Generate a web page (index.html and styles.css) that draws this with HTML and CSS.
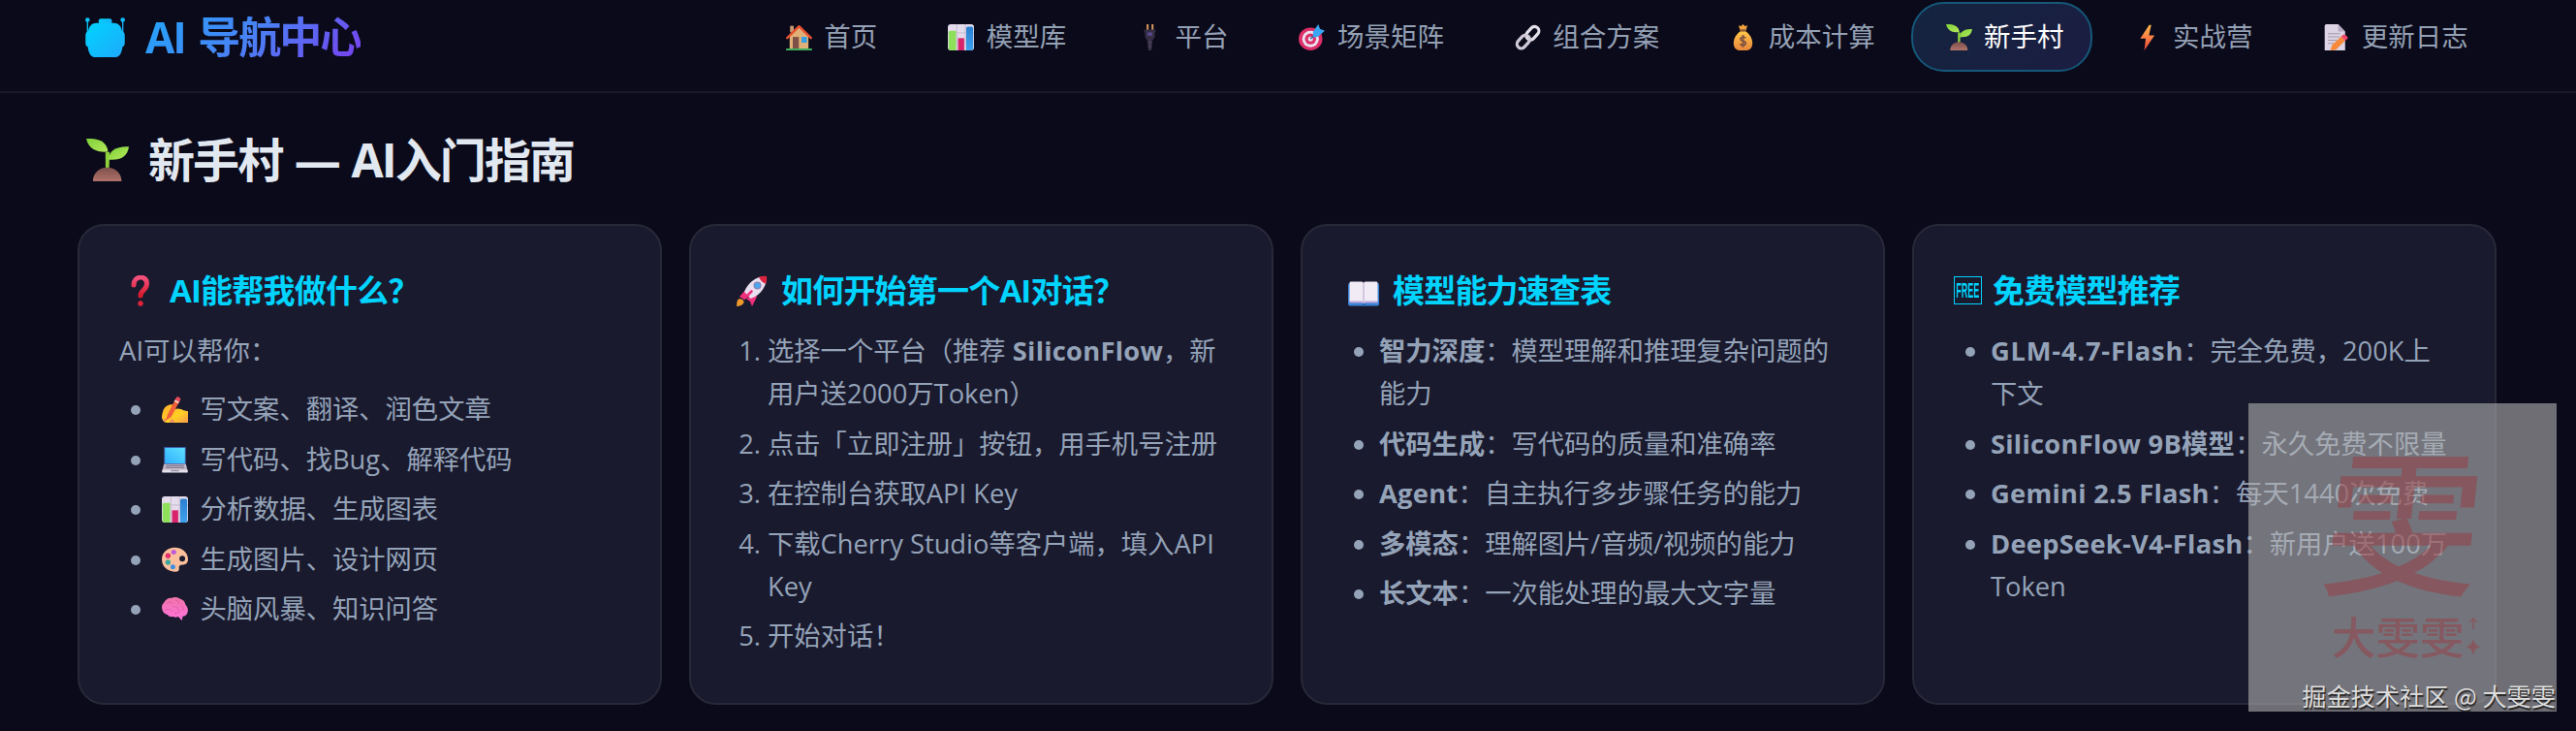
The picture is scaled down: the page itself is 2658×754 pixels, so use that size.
FILE: index.html
```html
<!DOCTYPE html>
<html lang="zh-CN">
  <head>
    <meta charset="UTF-8">
    <title>AI 导航中心</title>
    <link rel="stylesheet" href="styles.css">
  </head>
  <body>
    <!-- Icon sprite -->
    <svg class="sprite" width="0" height="0">
      <defs>
        <linearGradient id="g-leaf" x1="0" y1="0" x2="1" y2="1"><stop offset="0" stop-color="#7fd13b"/><stop offset="1" stop-color="#b5e85a"/></linearGradient>
        <linearGradient id="g-soil" x1="0" y1="0" x2="0" y2="1"><stop offset="0" stop-color="#7d4f4b"/><stop offset="1" stop-color="#b0736a"/></linearGradient>
        <linearGradient id="g-bolt" x1="0" y1="0" x2="0" y2="1"><stop offset="0" stop-color="#ffb84a"/><stop offset="1" stop-color="#f5463f"/></linearGradient>
        <linearGradient id="g-gold" x1="0" y1="0" x2="0" y2="1"><stop offset="0" stop-color="#ffc648"/><stop offset="1" stop-color="#e8863c"/></linearGradient>
        <linearGradient id="g-brain" x1="0" y1="0" x2="0" y2="1"><stop offset="0" stop-color="#ef74a8"/><stop offset="1" stop-color="#ff74dc"/></linearGradient>
        <linearGradient id="g-screen" x1="0" y1="1" x2="1" y2="0"><stop offset="0" stop-color="#2fb0ff"/><stop offset="1" stop-color="#5fe0ff"/></linearGradient>
        <linearGradient id="g-hand" x1="0" y1="0" x2="1" y2="1"><stop offset="0" stop-color="#ffb02e"/><stop offset=".6" stop-color="#ffd023"/><stop offset="1" stop-color="#f59a4a"/></linearGradient>
        <linearGradient id="g-red" x1="0" y1="0" x2="0" y2="1"><stop offset="0" stop-color="#f4507c"/><stop offset="1" stop-color="#d81a2c"/></linearGradient>
        <linearGradient id="g-logo" x1="0" y1="0" x2="1" y2="1"><stop offset="0" stop-color="#00d4ff"/><stop offset="1" stop-color="#1fa9fb"/></linearGradient>
        <linearGradient id="g-blue" x1="0" y1="0" x2="0" y2="1"><stop offset="0" stop-color="#2a7fd0"/><stop offset="1" stop-color="#3fa2ee"/></linearGradient>
      </defs>
      <symbol id="i-robot" viewBox="0 0 32 32">
        <g fill="url(#g-logo)">
          <circle cx="1.800" cy="1.900" r="1.800"/><circle cx="30.200" cy="1.900" r="1.800"/>
          <path d="M1.300 2h1v14h-1zM29.700 2h1v14h-1z"/>
          <rect x="10.800" y="1" width="10.600" height="4.500" rx="1.600"/>
          <path d="M9 4.500h14c3.600 0 6 2.500 6.600 6.500 1.400.6 2.200 1.700 2.200 3.600v5.600c0 1.900-.6 3-1.800 3.500-.5 4.300-2.200 8.300-5.500 8.300h-17c-3.300 0-5-4-5.500-8.300C.8 23.200.2 22.100.2 20.200v-5.600c0-1.900.8-3 2.200-3.600C3 7 5.400 4.500 9 4.500z"/>
        </g>
      </symbol>
      <symbol id="i-seed" viewBox="0 0 32 32">
        <path d="M14.400 10h3.200l-.5 14h-2.600z" fill="#8ed03c"/>
        <path d="M0 0c9-.6 15.800 2.400 16.300 9.800-7.300.6-14.300-1-16.300-9.800z" fill="url(#g-leaf)"/>
        <path d="M32 6c-1 7.400-6.500 10.600-15.300 9.700C17 9 22.500 5.500 32 6z" fill="url(#g-leaf)"/>
        <path d="M5 32c0-6.200 4.700-10.400 10.700-10.400S26.500 25.800 26.500 32z" fill="url(#g-soil)"/>
      </symbol>
      <symbol id="i-home" viewBox="0 0 32 32">
        <path d="M5 2h4.500v8H5z" fill="#c89a72"/>
        <path d="M4.500 14.500L16 3.500l11.500 11V30h-23z" fill="#e0b078"/>
        <path d="M8.300 15.500h7.400V30H8.300z" fill="#7d5148"/>
        <path d="M19 15.500h6.500v7H19z" fill="#2f9fe8"/>
        <path d="M1.500 16.800L16 2.600l14.500 14.200" fill="none" stroke="#e8502e" stroke-width="2.800" stroke-linecap="round" stroke-linejoin="round"/>
        <rect y="29.500" width="32" height="2.500" rx="1" fill="#3fae5a"/>
      </symbol>
      <symbol id="i-chart" viewBox="0 0 32 32">
        <rect width="32" height="32" rx="3.500" fill="#e4dcec"/>
        <path d="M0 10.500h32M0 21h32M11 0v32M21.500 0v32" stroke="#c2b6cc" stroke-width="1"/>
        <path d="M3 8h7v24H4a3 3 0 0 1-3-3V9z" fill="#8ee05a"/>
        <path d="M12.500 17h7.500v15h-7.500z" fill="#d8246a"/>
        <path d="M22.500 5a2 2 0 0 1 2-2H29a2 2 0 0 1 2 2v24a3 3 0 0 1-3 3h-5.500z" fill="url(#g-blue)"/>
      </symbol>
      <symbol id="i-plug" viewBox="0 0 32 32">
        <path d="M12 0h2.400v8H12zM18 0h2.400v8H18z" fill="#d8985e"/>
        <path d="M9 6.500h14v3l-1 .8v5.500L19 20l-1 12h-4l-1-12-3-4.200v-5.500l-1-.8z" fill="#352e44"/>
        <rect x="13" y="10" width="6" height="4" fill="#5a488e"/>
        <path d="M14 22h4M14.200 25h3.600M14.400 28h3.200" stroke="#5c5468" stroke-width="1"/>
      </symbol>
      <symbol id="i-target" viewBox="0 0 32 32">
        <ellipse cx="14.500" cy="18" rx="14.500" ry="14" fill="#dc2e68"/>
        <ellipse cx="14.500" cy="18" rx="10.200" ry="10" fill="#ece2f0"/>
        <ellipse cx="14.500" cy="18" rx="6.800" ry="6.600" fill="#dc2e68"/>
        <circle cx="14.500" cy="18" r="3" fill="#ece2f0"/>
        <path d="M14.500 18L25 7.500" stroke="#3a6fa8" stroke-width="2"/>
        <path d="M17.500 9.500L24 0l2 5.500L32 8l-8.500 7.500-5.500.5z" fill="#3aa6f2"/>
      </symbol>
      <symbol id="i-link" viewBox="0 0 32 32">
        <g fill="none" stroke-width="3.800">
          <rect x="-5" y="-9" width="10.500" height="18" rx="5.200" transform="translate(21.500 10.800) rotate(42)" stroke="#e4e0ea"/>
          <rect x="-5" y="-9" width="10.500" height="18" rx="5.200" transform="translate(10.300 21.200) rotate(42)" stroke="#cfc9d8"/>
        </g>
      </symbol>
      <symbol id="i-money" viewBox="0 0 32 32">
        <path d="M10.500 1.500l3 1L16 0l2.500 2.500 3-1-2 6h-7z" fill="#f2a23c"/>
        <rect x="12" y="6.300" width="8" height="2.800" rx="1" fill="#8a5a34"/>
        <path d="M12.500 8.800h7C24 12 27.500 17 27.500 23c0 6-3.500 9-8 9h-7c-4.500 0-8-3-8-9 0-6 3.500-11 8-14.200z" fill="url(#g-gold)"/>
        <path d="M19.300 17c-1-2-6.300-1.800-6.300 1.200 0 3.200 6.300 1.700 6.300 5 0 3.200-5.500 3.200-6.800.8M16 13v15" fill="none" stroke="#7d5040" stroke-width="2"/>
      </symbol>
      <symbol id="i-bolt" viewBox="0 0 32 32">
        <path d="M18.500 1L7.500 17.500h6.800L12.500 32 25 13.500h-6.800L21 1z" fill="url(#g-bolt)"/>
      </symbol>
      <symbol id="i-memo" viewBox="0 0 32 32">
        <path d="M2 2a2 2 0 0 1 2-2h14.500l8.500 9v23H2z" fill="#dcd4e4"/>
        <path d="M18.500 0l8.500 9h-8.500z" fill="#b4a8c0"/>
        <path d="M6 11.500h15M6 15.500h14M6 19.500h11M6 23.500h7" stroke="#a196ac" stroke-width="1.200"/>
        <path d="M11 25.500L22 15l5 5-11.500 11.500-6.500.5z" fill="#f7893a"/>
        <path d="M22 15l3-2.500c1.600-.6 6 3.200 5.200 5L27 20z" fill="#f0486a"/>
      </symbol>
      <symbol id="i-question" viewBox="0 0 32 32">
        <path d="M9 10C9 0 22.500-.5 22.500 8.500c0 7-6.500 6.500-6.500 12.500" fill="none" stroke="url(#g-red)" stroke-width="5" stroke-linecap="round"/>
        <circle cx="16" cy="29" r="2.700" fill="#e0243c"/>
      </symbol>
      <symbol id="i-rocket" viewBox="0 0 32 32">
        <path d="M3 22l8-9 3 4-6 8zM10 24l9-6 2 4-5 10-2-5z" fill="#f0307c"/>
        <path d="M2 24.500c3-1 6 1 5.500 3.500S3 32 0 32c.5-2 0-6 2-7.500z" fill="#f09a2e"/>
        <path d="M30.800 1.200C24 0 12.500 5 8 17l6.500 7C26 20 32 9 30.800 1.200z" fill="#e8e0f0"/>
        <path d="M31 1c-2.500-.7-5.500-.2-8 .8 1.500 3.500 4 6 7.200 7C31 6 31.600 3 31 1z" fill="#dc2440"/>
        <path d="M8.500 23.500l7-7" stroke="#f0307c" stroke-width="2.600" stroke-linecap="round"/>
        <circle cx="21.500" cy="10.500" r="4" fill="#8a80b0"/><circle cx="21.500" cy="10.500" r="2.800" fill="#4aa8f0"/>
      </symbol>
      <symbol id="i-book" viewBox="0 0 32 32">
        <rect x="0" y="8" width="32" height="23.500" rx="2" fill="#3a84d8"/>
        <path d="M1.500 28.500h29v-4h-29z" fill="#c0a8dc"/>
        <path d="M1.500 8c0-1 .7-1.500 1.500-1.500h11c1.200 0 2 .8 2 2v20c0-1-.8-2-2-2H1.500zM30.500 8c0-1-.7-1.500-1.500-1.500H18c-1.200 0-2 .8-2 2v20c0-1 .8-2 2-2h12.500z" fill="#f0ebf5"/>
        <path d="M16 8v23" stroke="#c6b8d8" stroke-width="1.400"/>
        <rect x="14.600" y="29" width="2.800" height="3" rx="1" fill="#2866b0"/>
      </symbol>
      <symbol id="i-write" viewBox="0 0 32 32">
        <path d="M2 16c2-4 7-7 11-6 2 1.500 1 4-1.500 5.500l-2 3 6-3c4-1.500 8-.5 11 1.500l5.500 1V32H6.500C3 32 0 29 0 25c0-3 1-6 2-9z" fill="url(#g-hand)"/>
        <path d="M2 26l3 2-2 4zM12 27l4 4-7 1z" fill="#f0886a"/>
        <path d="M4.500 29.500L7 22 17 2.500l5 2.500L11.500 25z" fill="#f0603a"/>
        <path d="M16 4.500L18 1c1-1.600 5.500.5 4.800 2.500L21 7z" fill="#e84a5a"/>
        <path d="M15.200 6l5 2.500 1-2-5-2.500z" fill="#f0d4c8"/>
      </symbol>
      <symbol id="i-laptop" viewBox="0 0 32 32">
        <rect x="2.500" y="0" width="27" height="22" rx="1" fill="#3a5ea0"/>
        <rect x="3.800" y="1.200" width="24.400" height="19" fill="url(#g-screen)"/>
        <path d="M2.500 21h27l2 8H.5z" fill="#c4bccc"/>
        <path d="M5 23h22M4.300 25.300h23.400" stroke="#82798e" stroke-width="1.300"/>
        <path d="M.3 28h31.400v2.500a1 1 0 0 1-1 1H1.300a1 1 0 0 1-1-1z" fill="#e6e0ec"/>
        <rect x="11" y="28.300" width="10" height="1.600" fill="#9a90a4"/>
      </symbol>
      <symbol id="i-palette" viewBox="0 0 32 32">
        <path d="M15.500 1C24 1 32 6.500 32 15.500c0 4-2.500 6.500-6.500 6.500-3.500 0-5 1.500-4.500 4 .5 2.500-1 4.500-4 4.500C7.500 30.500 0 25 0 15.500 0 7 7 1 15.500 1z" fill="#fbbf9c"/>
        <circle cx="25" cy="14.500" r="3.500" fill="#1a1a2e"/>
        <circle cx="14.500" cy="6.500" r="3" fill="#c05ad8"/>
        <circle cx="7.500" cy="11" r="3.200" fill="#e2306c"/>
        <circle cx="7.500" cy="19" r="3.200" fill="#38a89c"/>
        <circle cx="13.500" cy="24.500" r="3" fill="#3f8fe0"/>
      </symbol>
      <symbol id="i-brain" viewBox="0 0 32 32">
        <path d="M12 2c3-1.500 8-1 10 1 4 1 6.500 4 7 7.500 2.500 2.500 3.500 6 2.500 9-.5 3-3 5-6 5l-1 5-4.500-4.500c-2.500 1-4 1-6 0-3 .5-6-.5-7-2.500-3-.5-6-3-6.500-6C-.5 13 0 10 2.500 8 4 4 8 1.500 12 2z" fill="url(#g-brain)"/>
        <path d="M6 9c3-3 6-2 7 0M17 5c3 0 4 2 4 4M4 17c3-2 6-1 8 1M14 13c4-1 6 1 6 4M24 12c2 1 3 3 2 5M16 21c3 0 5-1 6-3" fill="none" stroke="#d64c9c" stroke-width="1" stroke-opacity=".7" stroke-linecap="round"/>
      </symbol>
    </svg>

    <!-- Top navigation -->
    <header class="header">
      <div class="logo">
        <svg class="logo-icon"><use href="#i-robot"/></svg>
        <span class="logo-text">AI 导航中心</span>
      </div>
      <nav class="nav">
        <a class="nav-item"><svg class="icon"><use href="#i-home"/></svg>首页</a>
        <a class="nav-item"><svg class="icon"><use href="#i-chart"/></svg>模型库</a>
        <a class="nav-item"><svg class="icon"><use href="#i-plug"/></svg>平台</a>
        <a class="nav-item"><svg class="icon"><use href="#i-target"/></svg>场景矩阵</a>
        <a class="nav-item"><svg class="icon"><use href="#i-link"/></svg>组合方案</a>
        <a class="nav-item"><svg class="icon"><use href="#i-money"/></svg>成本计算</a>
        <a class="nav-item active"><svg class="icon"><use href="#i-seed"/></svg>新手村</a>
        <a class="nav-item"><svg class="icon"><use href="#i-bolt"/></svg>实战营</a>
        <a class="nav-item"><svg class="icon"><use href="#i-memo"/></svg>更新日志</a>
      </nav>
    </header>

    <main class="main">
      <h2 class="title"><svg class="title-icon"><use href="#i-seed"/></svg>新手村 — AI入门指南</h2>

      <div class="grid">
        <section class="card">
          <h3><svg class="card-icon"><use href="#i-question"/></svg>AI能帮我做什么？</h3>
          <p>AI可以帮你：</p>
          <ul class="list-spaced">
            <li><svg class="icon"><use href="#i-write"/></svg>写文案、翻译、润色文章</li>
            <li><svg class="icon"><use href="#i-laptop"/></svg>写代码、找Bug、解释代码</li>
            <li><svg class="icon"><use href="#i-chart"/></svg>分析数据、生成图表</li>
            <li><svg class="icon"><use href="#i-palette"/></svg>生成图片、设计网页</li>
            <li><svg class="icon"><use href="#i-brain"/></svg>头脑风暴、知识问答</li>
          </ul>
        </section>

        <section class="card">
          <h3><svg class="card-icon"><use href="#i-rocket"/></svg>如何开始第一个AI对话？</h3>
          <ol>
            <li>选择一个平台（推荐 <strong class="en">SiliconFlow</strong>，新用户送2000万Token）</li>
            <li>点击「立即注册」按钮，用手机号注册</li>
            <li>在控制台获取API Key</li>
            <li>下载Cherry Studio等客户端，填入API Key</li>
            <li>开始对话！</li>
          </ol>
        </section>

        <section class="card">
          <h3><svg class="card-icon"><use href="#i-book"/></svg>模型能力速查表</h3>
          <ul>
            <li><strong>智力深度</strong>：模型理解和推理复杂问题的能力</li>
            <li><strong>代码生成</strong>：写代码的质量和准确率</li>
            <li><strong class="en">Agent</strong>：自主执行多步骤任务的能力</li>
            <li><strong>多模态</strong>：理解图片/音频/视频的能力</li>
            <li><strong>长文本</strong>：一次能处理的最大文字量</li>
          </ul>
        </section>

        <section class="card">
          <h3><span class="free"><span>FREE</span></span>免费模型推荐</h3>
          <ul>
            <li><strong class="en-wide">GLM-4.7-Flash</strong>：完全免费，200K上下文</li>
            <li><strong class="en">SiliconFlow 9B模型</strong>：永久免费不限量</li>
            <li><strong class="en">Gemini 2.5 Flash</strong>：每天1440次免费</li>
            <li><strong class="en">DeepSeek-V4-Flash</strong>：新用户送100万Token</li>
          </ul>
        </section>
      </div>
    </main>

    <!-- Watermark -->
    <div class="watermark">
      <div class="seal">雯</div>
      <div class="seal-name">
        <span>大雯雯</span>
        <svg class="seal-mark" viewBox="0 0 16 44">
          <path d="M8 16V5M4 9l4-4 4 4" fill="none" stroke="currentColor" stroke-width="1.500"/>
          <path d="M8 26q1 7 8 8-7 1-8 9-1-8-8-9 7-1 8-8z" fill="currentColor"/>
        </svg>
      </div>
      <div class="credit">掘金技术社区 @ 大雯雯</div>
    </div>
  </body>
</html>
```

FILE: styles.css
```css
* {
  box-sizing: border-box;
  margin: 0;
  padding: 0;
}

html {
  font-size: 27.5px;
}

body {
  font-family: "Open Sans", "Noto Sans CJK SC", sans-serif;
  background: #0a0a1a;
  color: #e2e8f0;
  line-height: 1.6;
  height: 754px;
  overflow: hidden;
  position: relative;
}

.sprite {
  position: absolute;
}

/* Header */
.header {
  display: flex;
  justify-content: space-between;
  align-items: flex-start;
  height: 96px;
  padding: 2px 82px 0 80px;
  border-bottom: 2px solid #191928;
}

.logo {
  display: flex;
  align-items: center;
  height: 72px;
  padding-left: 8px;
}

.logo-icon {
  width: 41px;
  height: 41px;
  margin-right: 21px;
}

.logo-text {
  font-size: 44px;
  font-weight: 700;
  letter-spacing: -2px;
  word-spacing: 4px;
  background: linear-gradient(135deg, #1fa9fb, #4a80f5 50%, #7c3aed);
  -webkit-background-clip: text;
  background-clip: text;
  color: transparent;
}

.nav {
  display: flex;
  gap: 8.5px;
}

.nav-item {
  display: flex;
  align-items: center;
  height: 72px;
  padding: 0 27.2px;
  border: 2px solid transparent;
  border-radius: 34px;
  color: #94a0b4;
}

.nav-item.active {
  color: #fff;
  background: linear-gradient(135deg, #14243f, #1b1d42);
  border-color: #155879;
}

.icon {
  width: 27px;
  height: 27px;
  margin: 0 12.5px 0 6px;
}

/* Page title */
.main {
  padding: 31px 82px 0 80px;
}

.title {
  display: flex;
  align-items: center;
  font-size: 48px;
  line-height: 76px;
  letter-spacing: -1.9px;
  word-spacing: 2px;
  margin-bottom: 28px;
}

.title-icon {
  width: 44px;
  height: 44px;
  margin: 0 20px 0 9px;
}

/* Cards */
.grid {
  display: grid;
  grid-template-columns: repeat(4, 1fr);
  gap: 28px;
}

.card {
  height: 496px;
  padding: 40.5px 41px;
  background: #1a1a2e;
  border: 2px solid #282838;
  border-radius: 27.5px;
  color: #94a3b8;
}

.card h3 {
  display: flex;
  align-items: center;
  font-size: 33px;
  line-height: 52px;
  letter-spacing: -0.8px;
  color: #00d4ff;
  margin-bottom: 14.5px;
}

.card-icon {
  width: 32px;
  height: 32px;
  margin: 0 14px 0 6px;
}

.free {
  display: flex;
  justify-content: center;
  width: 29px;
  height: 29px;
  margin-right: 11px;
  border: 1.5px solid #00d4ff;
  font: 700 22px/27px "Liberation Sans", sans-serif;
  letter-spacing: 0;
}

.free span {
  transform: scaleX(0.41);
}

.card ul,
.card ol {
  padding: 0 2px 0 38px;
  font-size: 27.3px;
  line-height: 44px;
}

.card .list-spaced {
  margin-top: 16px;
}

.card li {
  margin-bottom: 7.5px;
}

.list-spaced .icon {
  vertical-align: -4px;
}

/* Latin names inside the lists */
.en {
  letter-spacing: 0.25px;
}

.en-wide {
  letter-spacing: 0.8px;
}

/* Watermark */
.watermark {
  position: absolute;
  left: 2320px;
  top: 416px;
  width: 318px;
  height: 318px;
  background: rgba(176, 176, 176, 0.6);
  color: rgba(150, 64, 70, 0.55);
  font-family: "Noto Sans CJK SC", sans-serif;
}

.seal {
  margin: 31px 0 0 80px;
  font-size: 162px;
  line-height: 170px;
  font-weight: 500;
  transform: skewX(-6deg);
}

.seal-name {
  display: flex;
  align-items: center;
  height: 50px;
  margin: 13px 0 0 86px;
  font-size: 45.5px;
  font-weight: 500;
}

.seal-mark {
  width: 16px;
  height: 44px;
  margin-left: 1px;
}

.credit {
  position: absolute;
  right: 1px;
  bottom: 2px;
  font-size: 25.2px;
  line-height: 30px;
  color: #dcdcdc;
  text-shadow: 1px 2px 1px #222;
  white-space: nowrap;
}
```
